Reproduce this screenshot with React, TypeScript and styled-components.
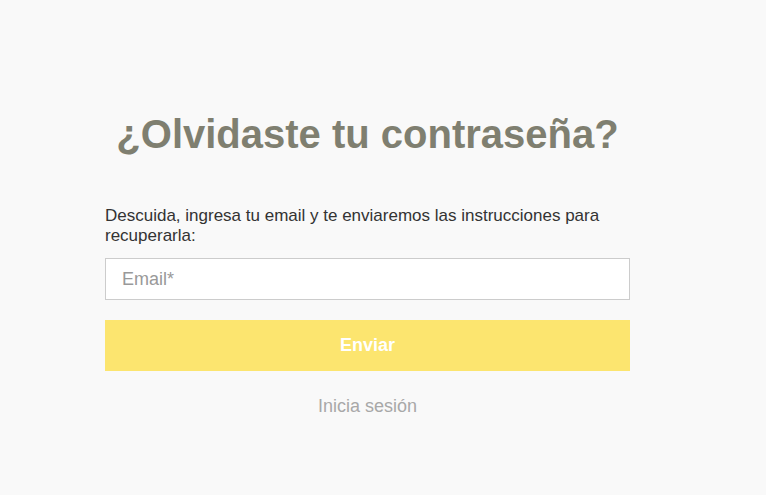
import React from 'react'
import styled, { createGlobalStyle } from 'styled-components'

const GlobalStyle = createGlobalStyle`
  html, body {
    margin: 0;
    padding: 0;
    background: #f9f9f9;
    font-family: "Liberation Sans", Arial, sans-serif;
  }
`

const Page = styled.div`
  width: 766px;
  height: 495px;
  display: flex;
  justify-content: flex-start;
  padding-left: 105px;
  box-sizing: border-box;
`

const Form = styled.form`
  width: 525px;
  display: flex;
  flex-direction: column;
  padding-top: 110px;
`

const Title = styled.h1`
  margin: 0 0 48px 0;
  font-size: 40px;
  line-height: 48px;
  font-weight: 700;
  text-align: center;
  color: #7f7f70;
`

const Hint = styled.p`
  margin: 0 0 12px 0;
  font-size: 17px;
  line-height: 20px;
  color: #333;
`

const EmailInput = styled.input`
  height: 42px;
  box-sizing: border-box;
  border: 1px solid #cccccc;
  background: #fff;
  padding: 0 16px;
  font-family: inherit;
  font-size: 18px;
  color: #333;
  outline: none;

  &::placeholder {
    color: #999;
  }
`

const SubmitButton = styled.button`
  margin-top: 20px;
  height: 51px;
  border: 0;
  background: #fce56f;
  color: #fff;
  font-family: inherit;
  font-size: 18px;
  font-weight: 700;
  cursor: pointer;
`

const LoginLink = styled.a`
  margin-top: 25px;
  align-self: center;
  font-size: 18px;
  line-height: 20px;
  color: #a8a8a8;
  text-decoration: none;
  cursor: pointer;
`

export default function App() {
  return (
    <>
      <GlobalStyle />
      <Page>
        <Form onSubmit={(e) => e.preventDefault()}>
          <Title>¿Olvidaste tu contraseña?</Title>
          <Hint>Descuida, ingresa tu email y te enviaremos las instrucciones para recuperarla:</Hint>
          <EmailInput type="email" placeholder="Email*" />
          <SubmitButton type="submit">Enviar</SubmitButton>
          <LoginLink>Inicia sesión</LoginLink>
        </Form>
      </Page>
    </>
  )
}
